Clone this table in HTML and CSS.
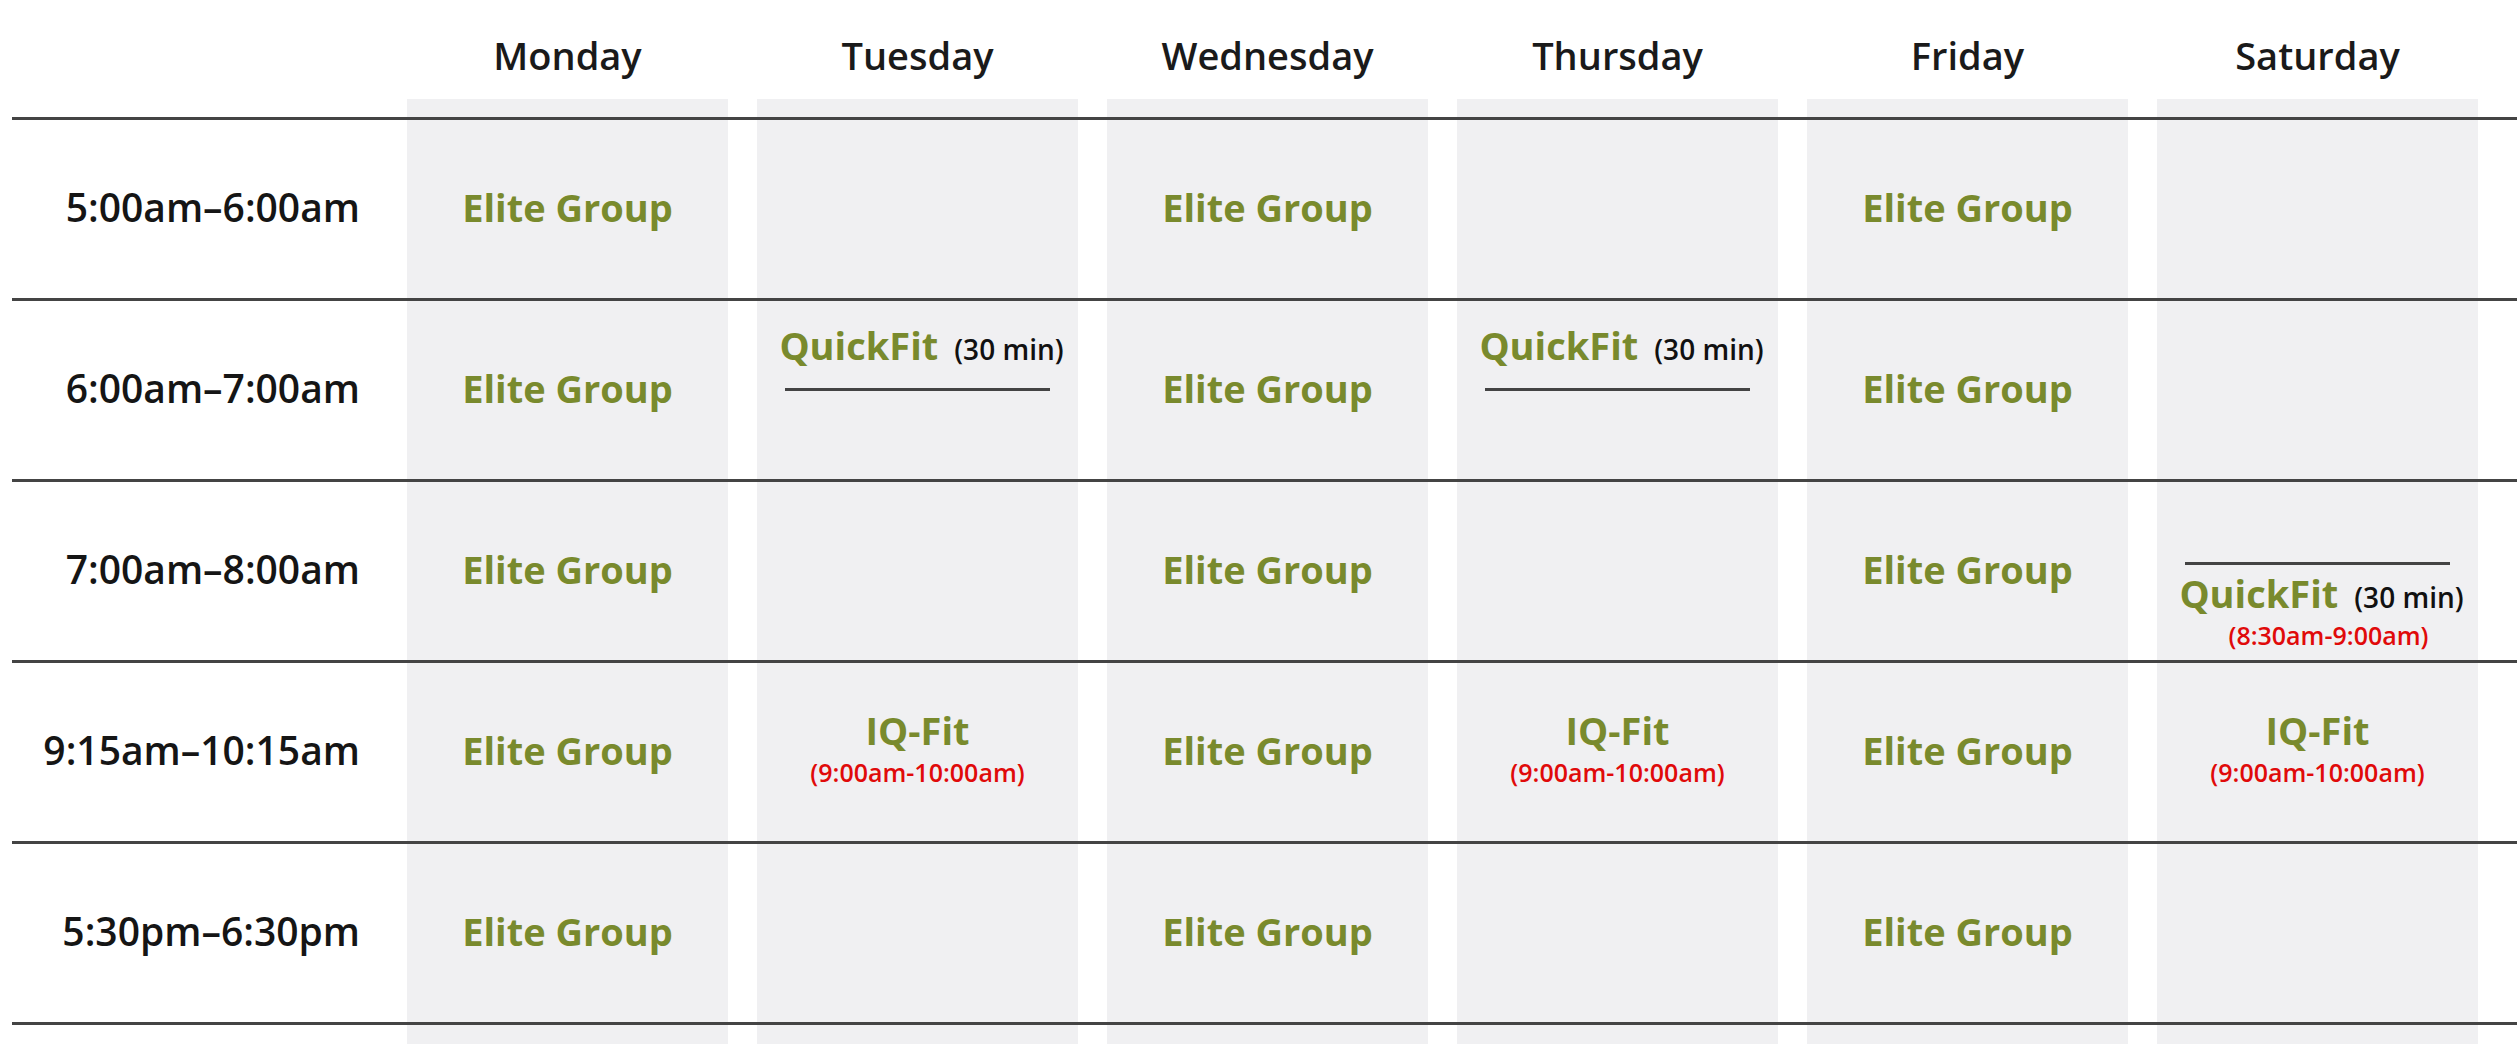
FILE: index.html
```html
<!DOCTYPE html>
<html lang="en">
<head>
<meta charset="utf-8">
<title>Class Schedule</title>
<link rel="stylesheet" href="styles.css">
</head>
<body>
<div class="schedule">
  <div class="row head">
    <div></div>
    <div class="day">Monday</div>
    <div class="day">Tuesday</div>
    <div class="day">Wednesday</div>
    <div class="day">Thursday</div>
    <div class="day">Friday</div>
    <div class="day">Saturday</div>
  </div>
  <div class="row spacer">
    <div></div>
    <div class="col"></div><div class="col"></div><div class="col"></div>
    <div class="col"></div><div class="col"></div><div class="col"></div>
  </div>

  <div class="row slot">
    <div class="time">5:00am–6:00am</div>
    <div class="col"><span class="cls">Elite Group</span></div>
    <div class="col"></div>
    <div class="col"><span class="cls">Elite Group</span></div>
    <div class="col"></div>
    <div class="col"><span class="cls">Elite Group</span></div>
    <div class="col"></div>
  </div>

  <div class="row slot">
    <div class="time">6:00am–7:00am</div>
    <div class="col"><span class="cls">Elite Group</span></div>
    <div class="col split">
      <div class="half"><div class="qf"><span class="cls">QuickFit</span><span class="dur">(30 min)</span></div></div>
      <div class="rule"></div>
      <div class="half"></div>
    </div>
    <div class="col"><span class="cls">Elite Group</span></div>
    <div class="col split">
      <div class="half"><div class="qf"><span class="cls">QuickFit</span><span class="dur">(30 min)</span></div></div>
      <div class="rule"></div>
      <div class="half"></div>
    </div>
    <div class="col"><span class="cls">Elite Group</span></div>
    <div class="col"></div>
  </div>

  <div class="row slot">
    <div class="time">7:00am–8:00am</div>
    <div class="col"><span class="cls">Elite Group</span></div>
    <div class="col"></div>
    <div class="col"><span class="cls">Elite Group</span></div>
    <div class="col"></div>
    <div class="col"><span class="cls">Elite Group</span></div>
    <div class="col split late">
      <div class="half"></div>
      <div class="rule"></div>
      <div class="half lower">
        <div class="qf tall"><span class="cls">QuickFit</span><span class="dur">(30 min)</span></div>
        <div class="note shifted">(8:30am-9:00am)</div>
      </div>
    </div>
  </div>

  <div class="row slot">
    <div class="time">9:15am–10:15am</div>
    <div class="col"><span class="cls">Elite Group</span></div>
    <div class="col"><div class="stack"><span class="cls">IQ-Fit</span><span class="note">(9:00am-10:00am)</span></div></div>
    <div class="col"><span class="cls">Elite Group</span></div>
    <div class="col"><div class="stack"><span class="cls">IQ-Fit</span><span class="note">(9:00am-10:00am)</span></div></div>
    <div class="col"><span class="cls">Elite Group</span></div>
    <div class="col"><div class="stack"><span class="cls">IQ-Fit</span><span class="note">(9:00am-10:00am)</span></div></div>
  </div>

  <div class="row slot">
    <div class="time">5:30pm–6:30pm</div>
    <div class="col"><span class="cls">Elite Group</span></div>
    <div class="col"></div>
    <div class="col"><span class="cls">Elite Group</span></div>
    <div class="col"></div>
    <div class="col"><span class="cls">Elite Group</span></div>
    <div class="col"></div>
  </div>

  <div class="row slot end">
    <div></div>
    <div class="col"></div><div class="col"></div><div class="col"></div>
    <div class="col"></div><div class="col"></div><div class="col"></div>
  </div>
</div>
</body>
</html>
```

FILE: styles.css
```css
html, body {
  margin: 0;
  padding: 0;
  background: #ffffff;
}
body {
  font-family: "Open Sans", "Noto Sans", sans-serif;
  color: #111111;
  overflow: hidden;
}
.schedule {
  margin-left: 12px;
}
.row {
  display: grid;
  grid-template-columns: 366px repeat(6, 321px);
  column-gap: 29px;
}
.head {
  height: 99px;
}
.day {
  display: flex;
  align-items: center;
  justify-content: center;
  padding-top: 11px;
  font-size: 38px;
  font-weight: 600;
  color: #1a1a1a;
}
.spacer {
  height: 18px;
}
.slot {
  height: 178px;
  border-top: 3px solid #444444;
}
.slot.end {
  height: 19px;
}
.col {
  background: #f0f0f2;
  display: flex;
  align-items: center;
  justify-content: center;
  padding-bottom: 5px;
}
.slot.end .col,
.spacer .col {
  padding-bottom: 0;
}
.time {
  display: flex;
  align-items: center;
  justify-content: flex-end;
  padding-right: 18px;
  padding-bottom: 5px;
  font-size: 39px;
  font-weight: 600;
  color: #151515;
}
.cls {
  font-size: 38px;
  font-weight: 700;
  color: #798a2d;
}
.col.split {
  display: grid;
  grid-template-columns: 100%;
  grid-template-rows: 87px 3px 1fr;
  align-items: stretch;
  justify-content: stretch;
  padding-bottom: 0;
}
.col.split.late {
  grid-template-rows: 80px 3px 1fr;
}
.half {
  display: flex;
  flex-direction: column;
  align-items: center;
  justify-content: center;
}
.half.lower {
  justify-content: flex-start;
  padding-top: 4px;
}
.rule {
  background: #444444;
  margin: 0 28px;
}
.qf {
  display: flex;
  align-items: baseline;
  gap: 16px;
  padding-left: 8px;
}
.qf.tall {
  line-height: 48px;
}
.dur {
  font-size: 28px;
  font-weight: 600;
  color: #111111;
}
.note {
  font-size: 25px;
  font-weight: 600;
  color: #e00a0a;
  line-height: 28px;
}
.note.shifted {
  padding-left: 22px;
}
.stack {
  display: flex;
  flex-direction: column;
  align-items: center;
  padding-bottom: 2px;
}
.stack .cls {
  line-height: 46px;
}
.stack .note {
  line-height: 38px;
}
```
